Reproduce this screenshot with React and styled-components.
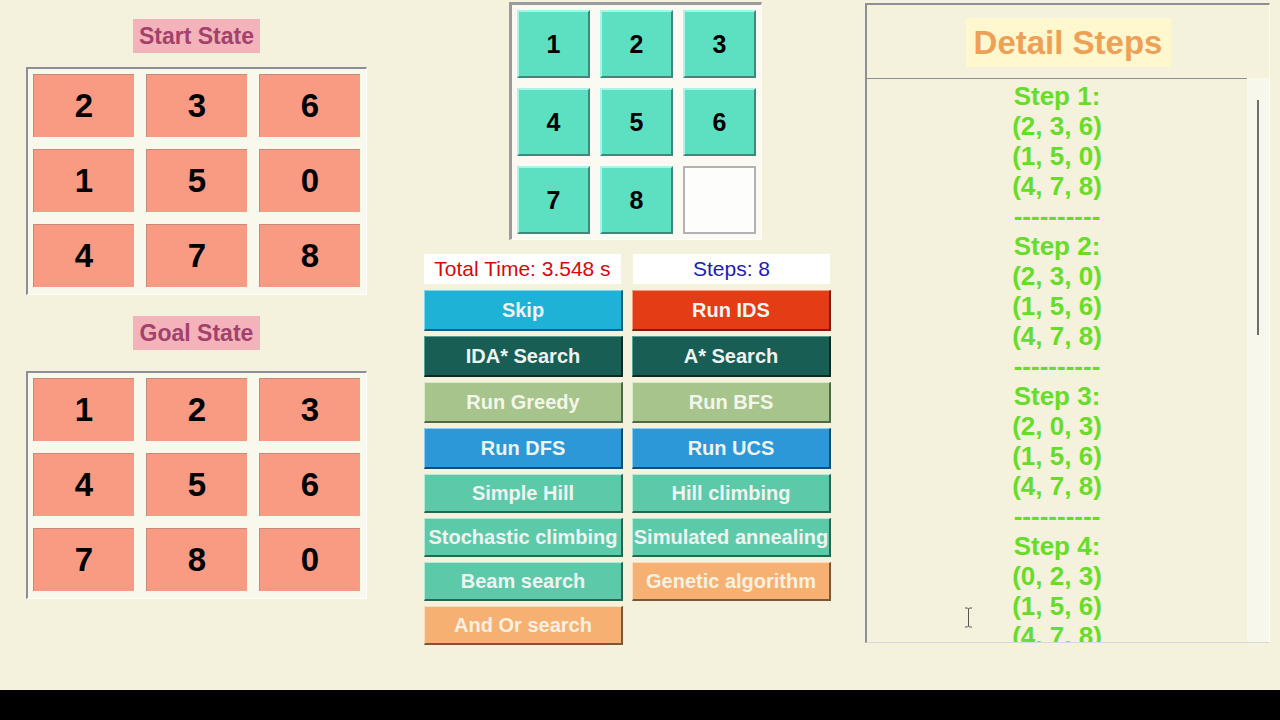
import React from "react";
import styled, { createGlobalStyle } from "styled-components";

const Global = createGlobalStyle`
  html, body { margin: 0; padding: 0; }
  body {
    background: #f4f2dc;
    font-family: "Liberation Sans", Arial, sans-serif;
    width: 1280px;
    height: 720px;
    overflow: hidden;
  }
`;

const Page = styled.div`
  width: 1280px;
  height: 720px;
  display: flex;
  flex-direction: column;
`;

const Main = styled.div`
  height: 690px;
  display: flex;
  align-items: flex-start;
  background: #f4f2dc;
`;

const Footer = styled.div`
  height: 30px;
  background: #000;
`;

/* ---------- left column ---------- */
const LeftCol = styled.div`
  width: 341px;
  margin-left: 26px;
  display: flex;
  flex-direction: column;
  align-items: center;
`;

const StateLabel = styled.div`
  margin-top: ${(p) => p.$mt}px;
  width: 127px;
  height: 34px;
  background: #f4b2ba;
  color: #a2426c;
  font-size: 23px;
  font-weight: bold;
  display: flex;
  align-items: center;
  justify-content: center;
  white-space: nowrap;
`;

const BoardFrame = styled.div`
  margin-top: ${(p) => p.$mt}px;
  box-sizing: border-box;
  width: 341px;
  height: 228px;
  border-top: 2px solid #8e8e98;
  border-left: 2px solid #8e8e98;
  border-right: 1px solid #ffffff;
  border-bottom: 1px solid #ffffff;
  background: #f9f8ec;
  padding: 5px 0 0 5px;
  display: grid;
  grid-template-columns: repeat(3, 101px);
  grid-template-rows: repeat(3, 63px);
  gap: 12px;
  align-content: start;
`;

const StateCell = styled.div`
  box-sizing: border-box;
  background: #f99a82;
  border-top: 1px solid #c98a7e;
  border-left: 1px solid #c98a7e;
  color: #000;
  font-size: 33px;
  font-weight: bold;
  display: flex;
  align-items: center;
  justify-content: center;
`;

/* ---------- middle column ---------- */
const MiddleCol = styled.div`
  width: 407px;
  margin-left: 57px;
  display: flex;
  flex-direction: column;
`;

const PuzzleFrame = styled.div`
  margin-top: 2px;
  margin-left: 85px;
  box-sizing: border-box;
  width: 253px;
  height: 238px;
  border-top: 3px solid #9a9aa0;
  border-left: 3px solid #9a9aa0;
  border-right: 1px solid #ffffff;
  border-bottom: 1px solid #ffffff;
  background: #fbfaf2;
  padding: 5px 0 0 5px;
  display: grid;
  grid-template-columns: repeat(3, 73px);
  grid-template-rows: repeat(3, 68px);
  gap: 10px;
  align-content: start;
`;

const Tile = styled.div`
  box-sizing: border-box;
  background: ${(p) => (p.$empty ? "#fdfdfb" : "#5ddfc2")};
  border-style: solid;
  border-width: 2px;
  border-color: ${(p) =>
    p.$empty
      ? "#b4b0b4 #b4b0b4 #b4b0b4 #b4b0b4"
      : "#a8f4ea #3e8a7a #3e8a7a #a8f4ea"};
  color: #000;
  font-size: 25px;
  font-weight: bold;
  display: flex;
  align-items: center;
  justify-content: center;
`;

const InfoRow = styled.div`
  margin-top: 14px;
  display: grid;
  grid-template-columns: 197px 197px;
  column-gap: 12px;
`;

const InfoLabel = styled.div`
  height: 30px;
  background: #ffffff;
  color: ${(p) => p.$color};
  font-size: 21px;
  display: flex;
  align-items: center;
  justify-content: center;
  white-space: nowrap;
`;

const ButtonGrid = styled.div`
  margin-top: 6px;
  display: grid;
  grid-template-columns: 199px 199px;
  grid-template-rows: repeat(4, 41px) repeat(4, 39px);
  column-gap: 9px;
  row-gap: 5px;
`;

const AlgoButton = styled.div`
  box-sizing: border-box;
  background: ${(p) => p.$bg};
  border-style: solid;
  border-width: 1px 2px 2px 1px;
  border-color: ${(p) => `${p.$light} ${p.$dark} ${p.$dark} ${p.$light}`};
  color: ${(p) => p.$fg || "#eef4f2"};
  font-size: 20px;
  font-weight: bold;
  display: flex;
  align-items: center;
  justify-content: center;
  white-space: nowrap;
  overflow: hidden;
`;

/* ---------- right column ---------- */
const RightCol = styled.div`
  width: 405px;
  margin-left: 34px;
`;

const StepsFrame = styled.div`
  margin-top: 3px;
  box-sizing: border-box;
  width: 405px;
  height: 640px;
  border-top: 2px solid #8e8e98;
  border-left: 2px solid #8e8e98;
  border-right: 1px solid #ffffff;
  border-bottom: 1px solid #d8d8d8;
  display: flex;
  flex-direction: column;
  align-items: center;
`;

const Title = styled.div`
  margin-top: 13px;
  width: 205px;
  height: 49px;
  background: #fff8cf;
  color: #eea056;
  font-size: 33px;
  font-weight: bold;
  display: flex;
  align-items: center;
  justify-content: center;
  white-space: nowrap;
`;

const StepsBody = styled.div`
  position: relative;
  margin-top: 11px;
  align-self: stretch;
  flex: 1;
  min-height: 0;
  display: flex;
`;

const StepsText = styled.div`
  width: 380px;
  border-top: 1px solid #8e8e98;
  padding-top: 2px;
  overflow: hidden;
  color: #68dc2a;
  font-size: 26px;
  font-weight: bold;
  line-height: 30px;
  text-align: center;
`;

const StepLine = styled.div`
  white-space: nowrap;
`;

const ScrollTrack = styled.div`
  flex: 1;
  background: #f8f7ec;
  display: flex;
  justify-content: center;
`;

const Thumb = styled.div`
  margin-top: 22px;
  width: 2px;
  height: 235px;
  background: #6e6e6e;
`;

const Cursor = styled.svg`
  position: absolute;
  left: 97px;
  top: 529px;
`;

const startState = [2, 3, 6, 1, 5, 0, 4, 7, 8];
const goalState = [1, 2, 3, 4, 5, 6, 7, 8, 0];
const current = [1, 2, 3, 4, 5, 6, 7, 8, 0];

const buttons = [
  { label: "Skip", bg: "#1eb2d6", light: "#7fd8ee", dark: "#18607a" },
  { label: "Run IDS", bg: "#e43c14", light: "#f59a80", dark: "#7a2008" },
  { label: "IDA* Search", bg: "#185e55", light: "#5aa094", dark: "#0a2a26" },
  { label: "A* Search", bg: "#185e55", light: "#5aa094", dark: "#0a2a26" },
  { label: "Run Greedy", bg: "#a6c48c", light: "#d6ecc6", dark: "#52664a", fg: "#f4f6ea" },
  { label: "Run BFS", bg: "#a6c48c", light: "#d6ecc6", dark: "#52664a", fg: "#f4f6ea" },
  { label: "Run DFS", bg: "#2c98d8", light: "#8ccdf2", dark: "#154c70" },
  { label: "Run UCS", bg: "#2c98d8", light: "#8ccdf2", dark: "#154c70" },
  { label: "Simple Hill", bg: "#5ccaa8", light: "#b0ecdc", dark: "#2c6452" },
  { label: "Hill climbing", bg: "#5ccaa8", light: "#b0ecdc", dark: "#2c6452" },
  { label: "Stochastic climbing", bg: "#5ccaa8", light: "#b0ecdc", dark: "#2c6452" },
  { label: "Simulated annealing", bg: "#5ccaa8", light: "#b0ecdc", dark: "#2c6452" },
  { label: "Beam search", bg: "#5ccaa8", light: "#b0ecdc", dark: "#2c6452" },
  { label: "Genetic algorithm", bg: "#f6b072", light: "#fcdcbc", dark: "#7a5838", fg: "#fbf0e2" },
  { label: "And Or search", bg: "#f6b072", light: "#fcdcbc", dark: "#7a5838", fg: "#fbf0e2" },
];

const steps = [
  [[2, 3, 6], [1, 5, 0], [4, 7, 8]],
  [[2, 3, 0], [1, 5, 6], [4, 7, 8]],
  [[2, 0, 3], [1, 5, 6], [4, 7, 8]],
  [[0, 2, 3], [1, 5, 6], [4, 7, 8]],
];

const stepLines = steps
  .flatMap((s, i) => [
    `Step ${i + 1}:`,
    ...s.map((r) => `(${r.join(", ")})`),
    "----------",
  ])
  .slice(0, -1);

export default function App() {
  return (
    <Page>
      <Global />
      <Main>
        <LeftCol>
          <StateLabel $mt={19}>Start State</StateLabel>
          <BoardFrame $mt={14}>
            {startState.map((v, i) => (
              <StateCell key={i}>{v}</StateCell>
            ))}
          </BoardFrame>
          <StateLabel $mt={21}>Goal State</StateLabel>
          <BoardFrame $mt={21}>
            {goalState.map((v, i) => (
              <StateCell key={i}>{v}</StateCell>
            ))}
          </BoardFrame>
        </LeftCol>

        <MiddleCol>
          <PuzzleFrame>
            {current.map((v, i) => (
              <Tile key={i} $empty={v === 0}>
                {v === 0 ? "" : v}
              </Tile>
            ))}
          </PuzzleFrame>
          <InfoRow>
            <InfoLabel $color="#d40a0a">Total Time: 3.548 s</InfoLabel>
            <InfoLabel $color="#1c1cb8">Steps: 8</InfoLabel>
          </InfoRow>
          <ButtonGrid>
            {buttons.map((b) => (
              <AlgoButton key={b.label} $bg={b.bg} $light={b.light} $dark={b.dark} $fg={b.fg}>
                {b.label}
              </AlgoButton>
            ))}
          </ButtonGrid>
        </MiddleCol>

        <RightCol>
          <StepsFrame>
            <Title>Detail Steps</Title>
            <StepsBody>
              <StepsText>
                {stepLines.map((l, i) => (
                  <StepLine key={i}>{l}</StepLine>
                ))}
              </StepsText>
              <ScrollTrack>
                <Thumb />
              </ScrollTrack>
              <Cursor width="9" height="21" viewBox="0 0 9 21">
                <path
                  d="M1 1h2.5L4.5 2 5.5 1H8M4.5 2v17M1 20h2.5l1-1 1 1H8"
                  stroke="#555"
                  strokeWidth="1"
                  fill="none"
                />
              </Cursor>
            </StepsBody>
          </StepsFrame>
        </RightCol>
      </Main>
      <Footer />
    </Page>
  );
}
